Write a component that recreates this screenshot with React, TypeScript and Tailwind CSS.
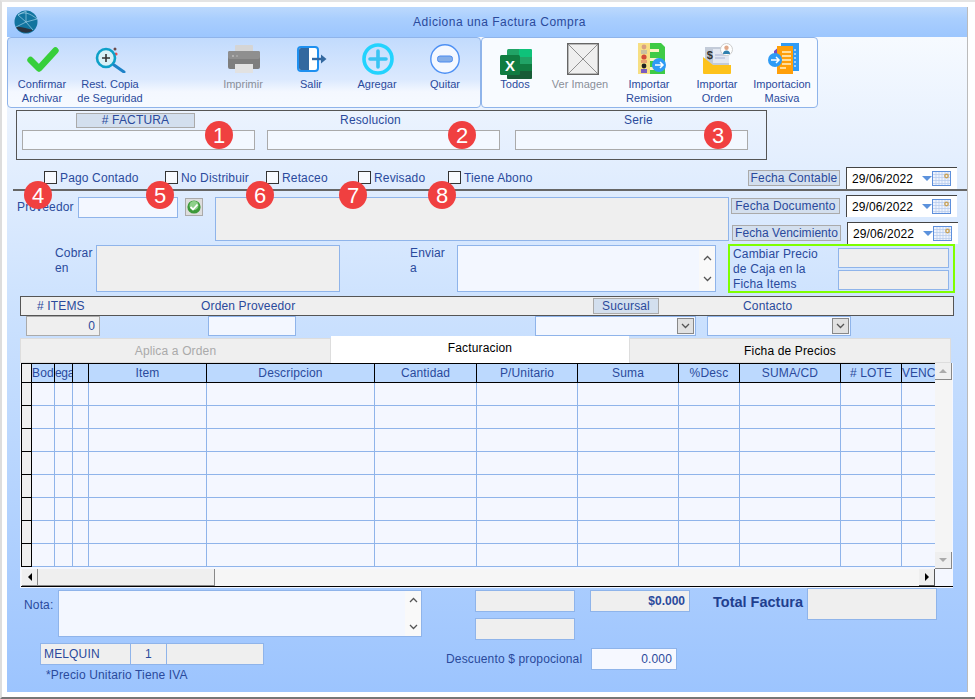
import React from "react";

const COLS = [
  { label: "Bod", w: 23 },
  { label: "ega", w: 18 },
  { label: "", w: 16 },
  { label: "Item", w: 118 },
  { label: "Descripcion", w: 168 },
  { label: "Cantidad", w: 102 },
  { label: "P/Unitario", w: 101 },
  { label: "Suma", w: 101 },
  { label: "%Desc", w: 61 },
  { label: "SUMA/CD", w: 101 },
  { label: "# LOTE", w: 61 },
  { label: "VENC", w: 33 },
];

const ROWS = [0, 1, 2, 3, 4, 5, 6, 7];

const BADGES = [
  { n: 1, cls: "left-[203px] top-[119px]" },
  { n: 2, cls: "left-[446px] top-[119px]" },
  { n: 3, cls: "left-[702px] top-[119px]" },
  { n: 4, cls: "left-[22px] top-[179px]" },
  { n: 5, cls: "left-[144px] top-[179px]" },
  { n: 6, cls: "left-[244px] top-[179px]" },
  { n: 7, cls: "left-[337px] top-[179px]" },
  { n: 8, cls: "left-[426px] top-[179px]" },
];

function Logo() {
  return (
    <svg width="24" height="24" viewBox="0 0 24 24">
      <circle cx="12" cy="12" r="11.5" fill="#12749f" />
      <path d="M2 17 C7 16 13 19 19 20 C15 24 6 24 2 17Z" fill="#2a3440" />
      <path d="M4 5 L12 12 L19 20 M12 1 L12 12 M12 12 L23 9 M4 5 C9 1 16 3 23 9 M2 17 L12 12 M12 1 L4 5" stroke="#9fd0e6" strokeWidth="0.7" fill="none" />
    </svg>
  );
}

function CheckIcon() {
  return (
    <svg width="32" height="25" viewBox="0 0 32 25">
      <polyline points="3.5,13 12,21.5 28.5,3.5" fill="none" stroke="#37cf3b" strokeWidth="6.4" strokeLinecap="round" strokeLinejoin="round" />
    </svg>
  );
}

function MagnifierIcon() {
  return (
    <svg width="32" height="28" viewBox="0 0 32 28">
      <circle cx="20" cy="4" r="1.5" fill="#6b4a4a" />
      <circle cx="21" cy="9" r="1.6" fill="#ee4d4d" />
      <circle cx="11" cy="13" r="9" fill="#d9f1f7" stroke="#0ea0c8" strokeWidth="2.6" />
      <path d="M7 13h8M11 9v8" stroke="#333" strokeWidth="1.6" />
      <path d="M19 20 L29 27" stroke="#1e82c8" strokeWidth="3" strokeLinecap="round" />
    </svg>
  );
}

function PrinterIcon() {
  return (
    <svg width="32" height="28" viewBox="0 0 32 28">
      <rect x="7" y="0" width="18" height="8" rx="1" fill="#d5d5d5" />
      <rect x="0" y="6" width="32" height="18" rx="2" fill="#7e7e7e" />
      <rect x="0" y="6" width="32" height="8" rx="2" fill="#8f8f8f" />
      <circle cx="5" cy="11" r="1" fill="#bbb" />
      <circle cx="9" cy="11" r="1" fill="#aaa" />
      <rect x="7" y="19" width="18" height="9" fill="#e2e2e2" />
    </svg>
  );
}

function DoorIcon() {
  return (
    <svg width="30" height="26" viewBox="0 0 30 26">
      <rect x="1" y="1" width="20" height="24" rx="3" fill="#fff" stroke="#1e90f0" strokeWidth="2" />
      <path d="M2 4 a2 2 0 0 1 2 -2 h8 v22 h-8 a2 2 0 0 1 -2 -2z" fill="#33689f" />
      <path d="M15 13h10" stroke="#33689f" strokeWidth="2.4" />
      <path d="M24 8.5 L29.5 13 L24 17.5Z" fill="#33689f" />
    </svg>
  );
}

function PlusIcon() {
  return (
    <svg width="32" height="32" viewBox="0 0 32 32">
      <circle cx="16" cy="16" r="14" fill="none" stroke="#22d3fe" strokeWidth="3.6" />
      <path d="M8 16h16M16 8v16" stroke="#38c4f3" strokeWidth="3.6" strokeLinecap="round" />
    </svg>
  );
}

function MinusIcon() {
  return (
    <svg width="30" height="30" viewBox="0 0 30 30">
      <circle cx="15" cy="15" r="14.2" fill="#f4f8ff" stroke="#4d90f4" strokeWidth="1.4" />
      <rect x="7.5" y="12" width="15" height="6" rx="2.5" fill="#85aee8" stroke="#4a8af0" strokeWidth="1" />
    </svg>
  );
}

function ExcelIcon() {
  return (
    <svg width="32" height="30" viewBox="0 0 32 30">
      <rect x="7" y="0" width="25" height="30" rx="1.5" fill="#21a366" />
      <path d="M19 0h11.5a1.5 1.5 0 0 1 1.5 1.5V8H19z" fill="#0fc27a" />
      <rect x="19" y="15" width="13" height="8" fill="#107c41" />
      <path d="M7 22h25v6.5a1.5 1.5 0 0 1-1.5 1.5h-22A1.5 1.5 0 0 1 7 28.5z" fill="#185c37" />
      <rect x="0" y="6" width="20" height="20" rx="1.5" fill="#107c41" />
      <text x="10" y="21.5" textAnchor="middle" fontSize="15" fontWeight="700" fill="#fff" fontFamily="Liberation Sans, sans-serif">X</text>
    </svg>
  );
}

function NoImageIcon() {
  return (
    <svg width="32" height="32" viewBox="0 0 32 32">
      <rect x="0.7" y="0.7" width="30.6" height="30.6" fill="#efefef" stroke="#666" strokeWidth="1.4" />
      <path d="M1 1L31 31M31 1L1 31" stroke="#777" strokeWidth="0.8" />
    </svg>
  );
}

function ArrowDot({ cx, cy }: { cx: number; cy: number }) {
  return (
    <g>
      <circle cx={cx} cy={cy} r="7" fill="#2f9bf5" />
      <path d={`M${cx - 4} ${cy}h7M${cx + 1} ${cy - 3}l3 3l-3 3`} stroke="#fff" strokeWidth="1.5" fill="none" />
    </g>
  );
}

function RemisionIcon() {
  return (
    <svg width="29" height="32" viewBox="0 0 29 32">
      <rect x="0" y="0" width="13" height="31" fill="#f7df84" />
      <path d="M12 0h11l4 4v27H12z" fill="#3fcb45" />
      <rect x="12" y="6" width="9" height="3" fill="#fdf3c4" />
      <rect x="12" y="15" width="9" height="3" fill="#fdf3c4" />
      <rect x="12" y="24" width="9" height="3" fill="#fdf3c4" />
      <circle cx="6" cy="4" r="2.4" fill="#d9a183" />
      <rect x="3" y="7" width="6" height="4" fill="#c9c2a0" />
      <circle cx="6" cy="14" r="2.6" fill="#d24b3a" />
      <rect x="3" y="17" width="6" height="3" fill="#e8a070" />
      <circle cx="6" cy="23" r="2.4" fill="#222" />
      <rect x="3" y="26" width="6" height="4" fill="#7a5bc0" />
      <ArrowDot cx={21} cy={22} />
    </svg>
  );
}

function OrdenIcon() {
  return (
    <svg width="30" height="32" viewBox="0 0 30 32">
      <rect x="2" y="4" width="24" height="18" fill="#c3cbd9" />
      <rect x="10" y="6" width="16" height="14" fill="#e3e8f2" />
      <text x="7" y="16" textAnchor="middle" fontSize="11" fontWeight="700" fill="#333" fontFamily="Liberation Sans, sans-serif">$</text>
      <path d="M12 12h12M12 15h10" stroke="#aab4d6" strokeWidth="1" />
      <path d="M0 14 L10 22 H28 V30 a1 1 0 0 1-1 1 H1 a1 1 0 0 1-1-1z" fill="#fdc21c" />
      <circle cx="23.5" cy="6.5" r="6" fill="#fff" stroke="#ccc" strokeWidth="1" />
      <circle cx="23.5" cy="4.8" r="2.2" fill="#e0a888" />
      <path d="M20 11 a3.5 3.5 0 0 1 7 0z" fill="#2f7fae" />
    </svg>
  );
}

function MasivaIcon() {
  return (
    <svg width="32" height="32" viewBox="0 0 32 32">
      <rect x="13" y="0" width="18" height="28" fill="#2f9bf5" />
      <path d="M6 8 L12 3 V12 H6z" fill="#7a4bc0" />
      <path d="M9 3h16v28H9z" fill="#ff9f0a" />
      <path d="M14 9h9M14 13h9M14 17h9M14 21h9M12 25h6" stroke="#fff2cc" strokeWidth="1.4" />
      <path d="M27 6v18" stroke="#cfe7fd" strokeWidth="1.4" strokeDasharray="2 2" />
      <ArrowDot cx={7} cy={17} />
    </svg>
  );
}

function CalendarIcon() {
  return (
    <svg width="19" height="15" viewBox="0 0 19 15">
      <rect x="0.5" y="0.5" width="18" height="14" fill="#eef3fd" stroke="#5e90dc" />
      <path d="M1 3.5h17M1 6.5h17M1 9.5h17M1 12.5h17M4 1v13M7 1v13M10 1v13M13 1v13M16 1v13" stroke="#b9cdee" strokeWidth="0.8" />
      <circle cx="14.5" cy="5" r="2.4" fill="#c9a35a" />
      <circle cx="14.5" cy="5" r="1" fill="#eef3fd" />
    </svg>
  );
}

function Chevron({ up }: { up?: boolean }) {
  return (
    <svg width="9" height="6" viewBox="0 0 9 6">
      <polyline points={up ? "1,5 4.5,1.5 8,5" : "1,1 4.5,4.5 8,1"} fill="none" stroke="#555" strokeWidth="1.3" />
    </svg>
  );
}

function DateBox({ className }: { className: string }) {
  return (
    <div className={`flex h-[22px] w-[111px] items-center border-l border-t border-[#444] bg-white pl-[5px] ${className}`}>
      <span className="w-[70px] pt-[2px] text-[12px] tracking-[0.1px] text-black">29/06/2022</span>
      <span className="h-0 w-0 border-x-[5px] border-t-[5px] border-x-transparent border-t-[#5c92dc]" />
      <CalendarIcon />
    </div>
  );
}

function FechaLabel({ text, className }: { text: string; className: string }) {
  return (
    <div className={`flex h-[16px] items-center justify-center border border-[#aaa] bg-[#d3dfee] pt-px ${className}`}>
      {text}
    </div>
  );
}

function Check({ label, className }: { label: string; className: string }) {
  return (
    <div className={`flex items-center ${className}`}>
      <span className="mr-[3px] h-[13px] w-[13px] border border-[#333] bg-[#f7faff]" />
      <span className="pt-px">{label}</span>
    </div>
  );
}

function Combo({ className }: { className: string }) {
  return (
    <div className={`flex h-[20px] items-center justify-end border border-[#8fb4ea] bg-[#f3f7ff] pr-px ${className}`}>
      <div className="flex h-[16px] w-[17px] items-center justify-center border border-[#888] bg-[#e1e1e1]">
        <Chevron />
      </div>
    </div>
  );
}

function ToolButton({ icon, lines, dim, className, iconCls }: { icon: React.ReactNode; lines: string[]; dim?: boolean; className: string; iconCls?: string }) {
  return (
    <div className={`flex w-[68px] shrink-0 flex-col items-center whitespace-nowrap ${dim ? "text-[#8a8f99]" : ""} ${className}`}>
      <div className={`flex h-[36px] items-center justify-center ${iconCls ?? ""}`}>{icon}</div>
      <div className="pr-[2px] text-center text-[11px] leading-[14px] tracking-normal">
        {lines.map((l) => (
          <div key={l}>{l}</div>
        ))}
      </div>
    </div>
  );
}

export default function App() {
  return (
    <div className="relative h-[699px] w-[975px] overflow-hidden border-b-2 border-l-2 border-t-2 border-b-[#777] border-l-[#ddd] border-t-[#e4e4e4] bg-white pl-[5px] pr-[6px] pt-[5px] text-[12px] leading-[15px] tracking-[0.15px] text-[#2a4a9c] [font-family:'Liberation_Sans',Arial,sans-serif]">
      <div className="flex h-[685px] w-[961px] flex-col border-r border-[#bbb] bg-[linear-gradient(#fbfdff_0%,#e6f0fe_20%,#cbe1fe_45%,#9cc4fe_100%)]">
        {/* Title */}
        <div className="flex h-[30px] shrink-0 items-center bg-[linear-gradient(#bcd9fd_0%,#a9cefe_40%,#9cc6fe_100%)] pl-[7px]">
          <Logo />
          <div className="flex-1 pr-[6px] text-center leading-none tracking-[0.5px]">Adiciona una Factura Compra</div>
        </div>

        {/* Toolbars */}
        <div className="flex h-[71px] shrink-0">
          <div className="flex h-[71px] w-[474px] items-start rounded-[4px] border border-[#8fb4ea] bg-[linear-gradient(#c2dbfd_0%,#dbe9fe_60%,#f4f8ff_78%,#f6faff_100%)] pl-px pt-[3px]">
            <ToolButton icon={<CheckIcon />} lines={["Confirmar", "Archivar"]} className="" />
            <ToolButton icon={<MagnifierIcon />} lines={["Rest. Copia", "de Seguridad"]} className="" />
            <ToolButton icon={<PrinterIcon />} lines={["Imprimir"]} dim className="ml-[65px]" />
            <ToolButton icon={<DoorIcon />} lines={["Salir"]} className="" />
            <ToolButton icon={<PlusIcon />} lines={["Agregar"]} className="ml-[-2px]" />
            <ToolButton icon={<MinusIcon />} lines={["Quitar"]} className="" iconCls="-translate-x-px" />
          </div>
          <div className="flex h-[71px] w-[337px] items-start rounded-[4px] border border-[#8fb4ea] bg-[#f8fbff] pt-[3px]">
            <ToolButton icon={<ExcelIcon />} lines={["Todos"]} className="" iconCls="translate-y-[5px]" />
            <ToolButton icon={<NoImageIcon />} lines={["Ver Imagen"]} dim className="ml-[-3px]" iconCls="translate-x-[2px]" />
            <ToolButton icon={<RemisionIcon />} lines={["Importar", "Remision"]} className="ml-px" iconCls="translate-x-[2px]" />
            <ToolButton icon={<OrdenIcon />} lines={["Importar", "Orden"]} className="" />
            <ToolButton icon={<MasivaIcon />} lines={["Importacion", "Masiva"]} className="ml-[-3px]" iconCls="translate-x-px" />
          </div>
        </div>

        {/* Factura / Resolucion / Serie */}
        <div className="ml-[9px] mt-[2px] flex h-[50px] w-[751px] shrink-0 gap-[12px] border border-[#555] pl-[5px] pt-[2px]">
          <div className="w-[233px]">
            <div className="ml-[54px] h-[15px] w-[119px] border border-[#aaa] bg-[#d3dfee] text-center leading-[13px]"># FACTURA</div>
            <div className="mt-[2px] h-[20px] border border-[#aaa] bg-[#f3f8ff]" />
          </div>
          <div className="w-[233px]">
            <div className="h-[15px] pr-[26px] text-center leading-[14px]">Resolucion</div>
            <div className="mt-[2px] h-[20px] border border-[#aaa] bg-[#f3f8ff]" />
          </div>
          <div className="ml-[3px] w-[233px]">
            <div className="h-[15px] pl-[14px] text-center leading-[14px]">Serie</div>
            <div className="mt-[2px] h-[20px] border border-[#aaa] bg-[#f3f8ff]" />
          </div>
        </div>

        {/* Checks */}
        <div className="mt-[6px] flex h-[23px] shrink-0 items-center pl-[37px]">
          <Check label="Pago Contado" className="w-[121px]" />
          <Check label="No Distribuir" className="w-[101px]" />
          <Check label="Retaceo" className="w-[92px]" />
          <Check label="Revisado" className="w-[90px]" />
          <Check label="Tiene Abono" className="w-[120px]" />
          <FechaLabel text="Fecha Contable" className="ml-[180px] mt-px w-[92px]" />
          <DateBox className="ml-[6px]" />
        </div>
        <div className="ml-[6px] h-[2px] shrink-0 bg-[#666]" />

        {/* Proveedor block */}
        <div className="flex h-[102px] shrink-0">
          <div className="w-[722px] shrink-0 pt-[6px]">
            <div className="flex h-[44px] pl-[10px]">
              <div className="w-[61px] pt-[3px]">Proveedor</div>
              <div className="h-[21px] w-[100px] border border-[#8fb4ea] bg-[#f3f7ff]" />
              <div className="ml-[7px] mt-px flex h-[18px] w-[18px] items-center justify-center border border-[#aaa] bg-[#ddd]">
                <svg width="14" height="14" viewBox="0 0 14 14">
                  <circle cx="7" cy="7" r="6.6" fill="#3d9a3a" />
                  <circle cx="7" cy="5.5" r="4.5" fill="#8ed08a" />
                  <polyline points="3.5,7 6,9.5 10.5,4.5" fill="none" stroke="#fff" strokeWidth="1.8" />
                </svg>
              </div>
              <div className="ml-[12px] h-[44px] w-[514px] border border-[#8fb4ea] bg-[#efefef]" />
            </div>
            <div className="mt-[4px] flex h-[47px] pl-[48px]">
              <div className="w-[41px] pt-px">
                Cobrar
                <br />
                en
              </div>
              <div className="h-[47px] w-[244px] border border-[#8fb4ea] bg-[#efefef]" />
              <div className="ml-[70px] w-[47px] pt-px">
                Enviar
                <br />a
              </div>
              <div className="flex h-[47px] w-[259px] justify-end border border-[#8fb4ea] bg-[#f3f7ff]">
                <div className="flex w-[16px] flex-col items-center justify-between bg-[#f9f9f9] py-[9px]">
                  <Chevron up />
                  <Chevron />
                </div>
              </div>
            </div>
          </div>
          <div className="w-[238px] shrink-0">
            <div className="mt-[4px] flex h-[22px] items-center pl-[2px]">
              <FechaLabel text="Fecha Documento" className="w-[109px]" />
              <DateBox className="ml-[6px]" />
            </div>
            <div className="mt-[5px] flex h-[22px] items-center pl-[3px]">
              <FechaLabel text="Fecha Vencimiento" className="w-[109px] tracking-[0.05px]" />
              <DateBox className="ml-[6px]" />
            </div>
            <div className="-ml-px flex h-[49px] w-[227px] border-2 border-[#7fff00] pl-[3px]">
              <div className="w-[105px] pt-[1px]">
                Cambiar Precio
                <br />
                de Caja en la
                <br />
                Ficha Items
              </div>
              <div className="flex w-[111px] flex-col gap-[2px] pt-[2px]">
                <div className="h-[20px] border border-[#8fb4ea] bg-[#efefef]" />
                <div className="h-[20px] border border-[#8fb4ea] bg-[#efefef]" />
              </div>
            </div>
          </div>
        </div>

        {/* Items bar */}
        <div className="ml-[13px] mt-[3px] flex h-[20px] w-[934px] shrink-0 items-center border border-[#555] bg-[#efefef] pl-[16px]">
          <span className="w-[164px]"># ITEMS</span>
          <span className="w-[392px]">Orden Proveedor</span>
          <span className="h-[16px] w-[66px] border border-[#aaa] bg-[#d3dfee] text-center leading-[14px]">Sucursal</span>
          <span className="ml-[84px]">Contacto</span>
        </div>
        <div className="flex h-[20px] shrink-0 pl-[19px]">
          <div className="h-[20px] w-[74px] border border-[#aaa] bg-[#efefef] pr-[4px] text-right leading-[18px]">0</div>
          <div className="ml-[108px] h-[20px] w-[88px] border border-[#8fb4ea] bg-[#f3f7ff]" />
          <Combo className="ml-[239px] w-[161px]" />
          <Combo className="ml-[11px] w-[144px]" />
        </div>

        {/* Tabs */}
        <div className="mt-px flex h-[26px] shrink-0 items-end pl-[13px]">
          <div className="flex h-[25px] w-[311px] items-center justify-center border border-[#ddd] bg-[#efefef] pt-px text-[#aaa]">Aplica a Orden</div>
          <div className="flex h-[27px] w-[298px] items-start justify-center bg-white pt-[5px] text-black">Facturacion</div>
          <div className="flex h-[25px] w-[322px] items-center justify-center border border-[#ddd] bg-[#efefef] pt-px text-black">Ficha de Precios</div>
        </div>

        {/* Grid */}
        <div className="ml-[13px] flex h-[225px] w-[933px] shrink-0 flex-col bg-[#f4f7ff] pl-px">
          <div className="flex h-[206px] shrink-0">
            <div className="w-[914px] overflow-hidden">
              <div className="flex h-[20px] border-y border-black">
                <div className="w-[11px] shrink-0 border-x border-black bg-[#efefef]" />
                {COLS.map((c) => (
                  <div key={c.label || "blank"} style={{ width: c.w }} className="shrink-0 overflow-hidden border-r border-black bg-[#bcd9fe] text-center leading-[19px] first:pl-px first:text-left last:border-r-0 last:text-left last:tracking-normal [&:nth-child(3)]:text-left [&:nth-child(3)]:tracking-[-0.3px] whitespace-nowrap">
                    {c.label}
                  </div>
                ))}
              </div>
              {ROWS.map((r) => (
                <div key={r} className="flex h-[23px]">
                  <div className="w-[11px] shrink-0 border-x border-b border-black bg-[#efefef]" />
                  {COLS.map((c) => (
                    <div key={c.label || "blank"} style={{ width: c.w }} className="shrink-0 border-b border-r border-[#8fb4ea] last:border-r-0" />
                  ))}
                </div>
              ))}
            </div>
            <div className="flex w-[17px] flex-col justify-between bg-[#f5f5f5]">
              <div className="flex h-[17px] items-center justify-center border-b border-r border-[#888] bg-[#efefef]">
                <span className="h-0 w-0 border-x-[4px] border-b-[4px] border-x-transparent border-b-[#aaa]" />
              </div>
              <div className="flex h-[17px] items-center justify-center border-b border-r border-[#888] bg-[#efefef]">
                <span className="h-0 w-0 border-x-[4px] border-t-[4px] border-x-transparent border-t-[#aaa]" />
              </div>
            </div>
          </div>
          <div className="flex h-[18px] w-[932px] shrink-0 border-b border-black">
            <div className="flex w-[914px] bg-[#f6f6f6] pl-px">
              <div className="flex h-[17px] w-[16px] items-center justify-center border-b border-r border-[#888] bg-[#efefef]">
                <span className="h-0 w-0 border-y-[4px] border-r-[4px] border-y-transparent border-r-black" />
              </div>
              <div className="h-[17px] w-[177px] border-b border-r border-[#888] bg-[#efefef]" />
              <div className="flex-1" />
              <div className="flex h-[17px] w-[16px] items-center justify-center border-b border-r border-[#555] bg-[#efefef]">
                <span className="h-0 w-0 border-y-[4px] border-l-[4px] border-y-transparent border-l-black" />
              </div>
            </div>
          </div>
        </div>

        {/* Footer */}
        <div className="flex flex-1">
          <div className="w-[439px] shrink-0 pt-[2px]">
            <div className="flex pl-[17px]">
              <div className="w-[34px] pt-[8px]">Nota:</div>
              <div className="flex h-[47px] w-[364px] justify-end border border-[#8fb4ea] bg-[#f3f7ff]">
                <div className="flex w-[16px] flex-col items-center justify-between bg-[#f9f9f9] py-[6px]">
                  <Chevron up />
                  <Chevron />
                </div>
              </div>
            </div>
            <div className="ml-[33px] mt-[6px] flex h-[22px]">
              <div className="w-[91px] border border-[#8fb4ea] bg-[#efefef] pl-[3px] leading-[20px]">MELQUIN</div>
              <div className="w-[35px] border-y border-[#8fb4ea] bg-[#efefef] text-center leading-[20px]">1</div>
              <div className="w-[98px] border border-[#8fb4ea] bg-[#efefef]" />
            </div>
            <div className="ml-[39px] mt-[3px]">*Precio Unitario Tiene IVA</div>
          </div>
          <div className="flex-1">
            <div className="flex h-[60px] pl-[29px]">
              <div className="flex w-[100px] flex-col gap-[6px] pt-[2px]">
                <div className="h-[22px] border border-[#8fb4ea] bg-[#efefef]" />
                <div className="h-[22px] border border-[#8fb4ea] bg-[#efefef]" />
              </div>
              <div className="ml-[15px] mt-[2px] h-[22px] w-[100px] border border-[#8fb4ea] bg-[#efefef] pr-[4px] text-right font-bold leading-[20px] tracking-normal">$0.000</div>
              <div className="ml-[23px] mt-[7px] w-[94px] text-[14.5px] font-bold tracking-normal whitespace-nowrap text-[#1f3f8f]">Total Factura</div>
              <div className="h-[32px] w-[130px] border border-[#8fb4ea] bg-[#efefef]" />
            </div>
            <div className="flex items-center">
              <div className="w-[145px] whitespace-nowrap">Descuento $ propocional</div>
              <div className="h-[22px] w-[86px] border border-[#8fb4ea] bg-[#f6f8ff] pr-[4px] text-right leading-[20px]">0.000</div>
            </div>
          </div>
        </div>
      </div>

      {/* Numbered markers */}
      {BADGES.map((b) => (
        <div key={b.n} className={`absolute flex h-[28px] w-[28px] items-center justify-center rounded-full bg-[#f04040] text-[22px] tracking-normal text-white ${b.cls}`}>
          {b.n}
        </div>
      ))}
    </div>
  );
}
